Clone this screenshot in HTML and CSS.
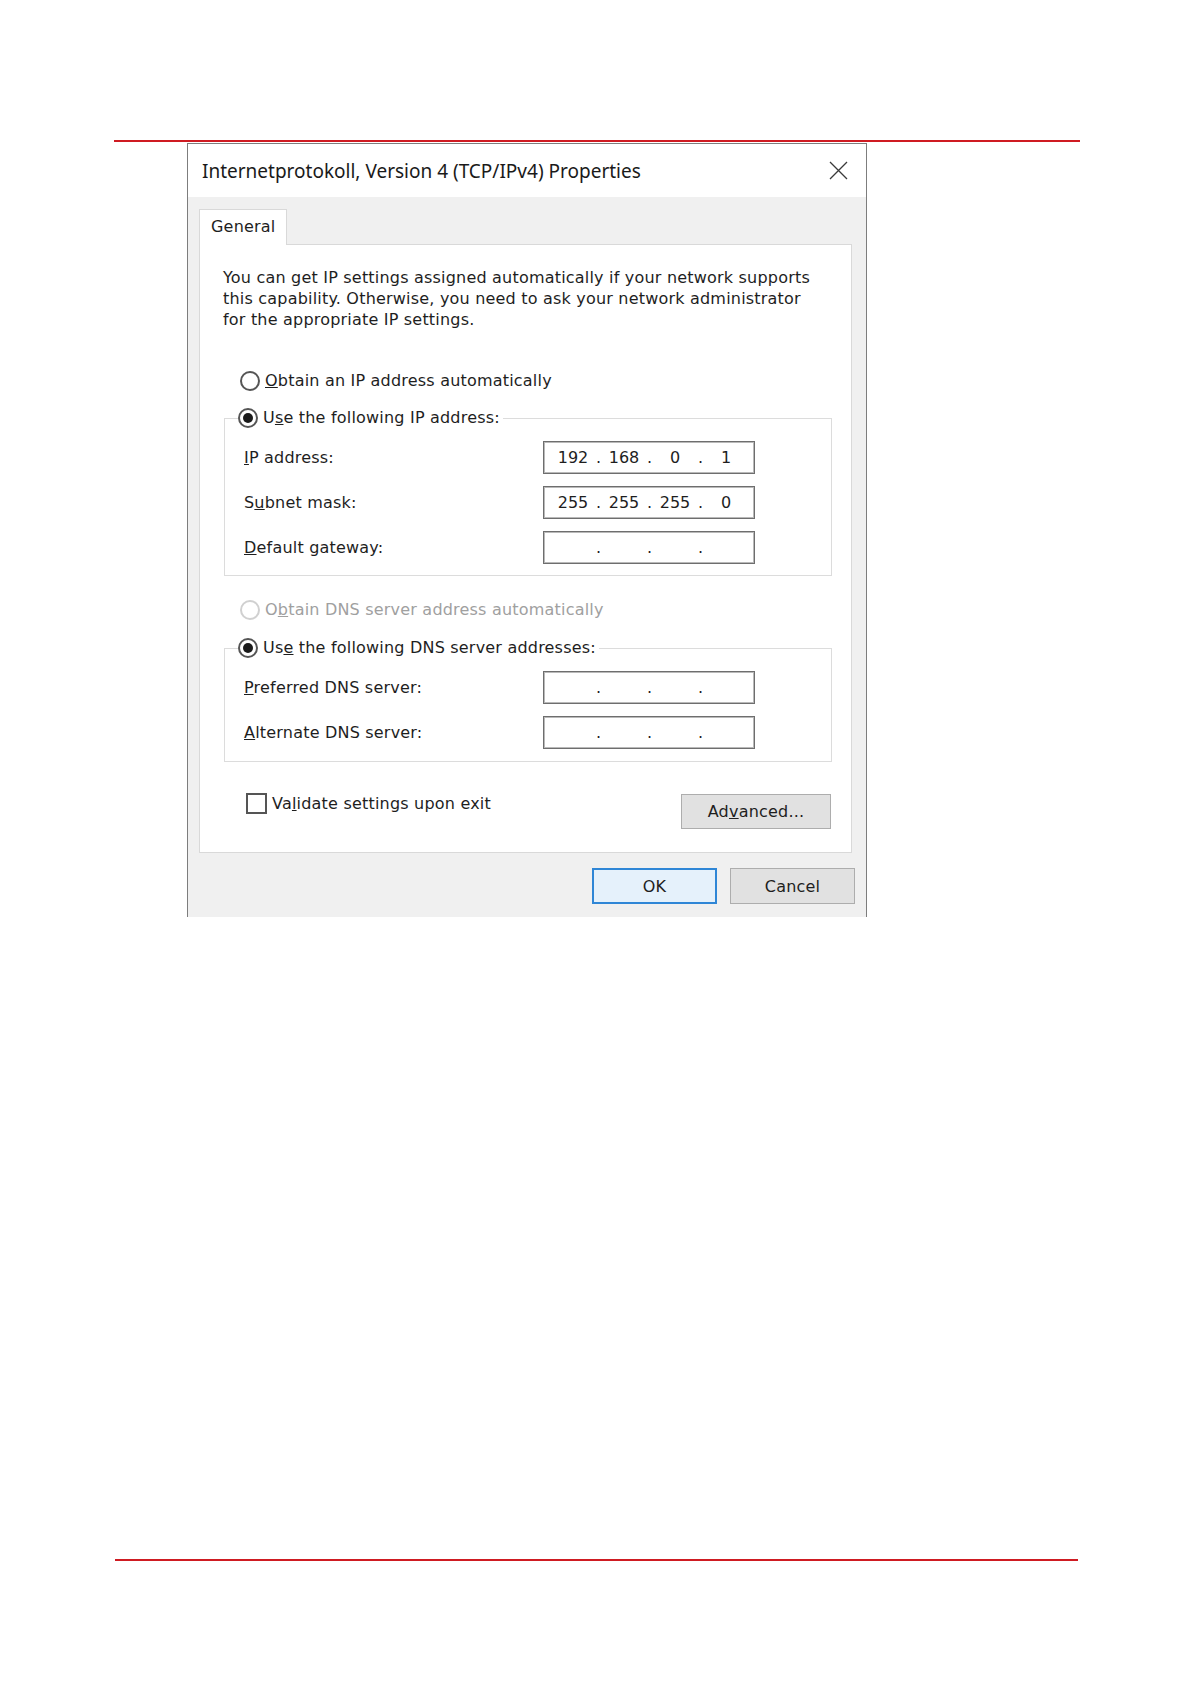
FILE: index.html
```html
<!DOCTYPE html>
<html lang="en">
<head>
  <meta charset="UTF-8">
  <title>Internetprotokoll, Version 4 (TCP/IPv4) Properties</title>
  <link rel="stylesheet" href="styles.css">
</head>
<body>
  <div class="page">
    <div class="rule"></div>

    <div class="dialog">
      <div class="titlebar">
        <span class="title">Internetprotokoll, Version 4 (TCP/IPv4) Properties</span>
        <svg class="close" width="19" height="19" viewBox="0 0 19 19">
          <path d="M1 1L18 18M18 1L1 18" stroke="#3a3a3a" stroke-width="1.3" fill="none"/>
        </svg>
      </div>

      <div class="dialog-body">
        <div class="tab">General</div>
        <div class="pane">
          <p class="intro">You can get IP settings assigned automatically if your network supports<br>this capability. Otherwise, you need to ask your network administrator<br>for the appropriate IP settings.</p>

          <div class="option first"><span class="radio"></span><span><u>O</u>btain an IP address automatically</span></div>

          <fieldset class="group">
            <legend class="option"><span class="radio checked"></span><span>U<u>s</u>e the following IP address:</span></legend>
            <div class="row">
              <label><u>I</u>P address:</label>
              <div class="ip"><span>192</span><b>.</b><span>168</span><b>.</b><span>0</span><b>.</b><span>1</span></div>
            </div>
            <div class="row">
              <label>S<u>u</u>bnet mask:</label>
              <div class="ip"><span>255</span><b>.</b><span>255</span><b>.</b><span>255</span><b>.</b><span>0</span></div>
            </div>
            <div class="row">
              <label><u>D</u>efault gateway:</label>
              <div class="ip"><span></span><b>.</b><span></span><b>.</b><span></span><b>.</b><span></span></div>
            </div>
          </fieldset>

          <div class="option disabled"><span class="radio"></span><span>O<u>b</u>tain DNS server address automatically</span></div>

          <fieldset class="group dns">
            <legend class="option"><span class="radio checked"></span><span>Us<u>e</u> the following DNS server addresses:</span></legend>
            <div class="row">
              <label><u>P</u>referred DNS server:</label>
              <div class="ip"><span></span><b>.</b><span></span><b>.</b><span></span><b>.</b><span></span></div>
            </div>
            <div class="row">
              <label><u>A</u>lternate DNS server:</label>
              <div class="ip"><span></span><b>.</b><span></span><b>.</b><span></span><b>.</b><span></span></div>
            </div>
          </fieldset>

          <div class="pane-footer">
            <div class="check-row"><span class="checkbox"></span><span>Va<u>l</u>idate settings upon exit</span></div>
            <button class="btn advanced">Ad<u>v</u>anced...</button>
          </div>
        </div>

        <div class="actions">
          <button class="btn ok">OK</button>
          <button class="btn">Cancel</button>
        </div>
      </div>
    </div>

    <div class="rule rule-bottom"></div>
  </div>
</body>
</html>
```

FILE: styles.css
```css
* {
  box-sizing: border-box;
}
body {
  margin: 0;
  background: #fff;
  color: #1e1e1e;
  font-family: "DejaVu Sans", sans-serif;
  font-size: 16px;
  letter-spacing: 0.2px;
}
.page {
  padding-top: 140px;
}
.rule {
  height: 2px;
  width: 966px;
  margin-left: 114px;
  background: #cf1b22;
}
.rule-bottom {
  width: 963px;
  margin-top: 642px;
  margin-left: 115px;
}
.dialog {
  width: 680px;
  margin: 1px 0 0 187px;
  border: 1px solid #7d7d7d;
  border-bottom: none;
  background: #f0f0f0;
}
.titlebar {
  height: 53px;
  background: #fff;
  display: flex;
  align-items: center;
  justify-content: space-between;
  padding: 0 18px 0 14px;
}
.title {
  font-family: "Noto Sans", sans-serif;
  font-size: 19px;
  letter-spacing: 0;
  color: #1a1a1a;
}
.close {
  display: block;
}
.dialog-body {
  padding: 12px 11px 13px 11px;
}
.tab {
  position: relative;
  z-index: 1;
  width: 88px;
  height: 36px;
  margin-bottom: -1px;
  padding-left: 11px;
  line-height: 34px;
  background: #fff;
  border: 1px solid #d9d9d9;
  border-bottom: none;
}
.pane {
  width: 653px;
  padding: 22px 19px 23px 23px;
  background: #fff;
  border: 1px solid #d9d9d9;
}
.intro {
  margin: 0;
  line-height: 21px;
}
.option {
  display: flex;
  align-items: center;
  gap: 5px;
  height: 22px;
  line-height: 22px;
}
.option.first {
  margin: 40px 0 0 17px;
}
.option.disabled {
  margin: 23px 0 0 17px;
  color: #a0a0a0;
}
.radio {
  flex: none;
  width: 20px;
  height: 20px;
  border: 2px solid #555;
  border-radius: 50%;
  background: #fff;
  display: flex;
  align-items: center;
  justify-content: center;
}
.radio.checked::after {
  content: "";
  width: 10px;
  height: 10px;
  border-radius: 50%;
  background: #1a1a1a;
}
.disabled .radio {
  border-color: #d0d0d0;
}
.group {
  margin: 15px 0 0 1px;
  padding: 12px 0 11px 0;
  border: 1px solid #dcdcdc;
}
.group.dns {
  margin-top: 16px;
  padding-bottom: 12px;
}
.group legend {
  margin-left: 13px;
  padding: 0 3px 0 0;
}
.row {
  display: flex;
  align-items: center;
  height: 33px;
  padding-left: 19px;
}
.row + .row {
  margin-top: 12px;
}
.row label {
  width: 299px;
}
.ip {
  width: 212px;
  height: 33px;
  display: flex;
  align-items: center;
  padding-left: 10px;
  border: 1px solid #6e6e6e;
  box-shadow: inset 0 0 0 1px #b9b9b9;
  letter-spacing: 0;
}
.ip span {
  width: 38px;
  text-align: center;
}
.ip b {
  width: 13px;
  font-weight: normal;
  text-align: center;
}
.pane-footer {
  display: flex;
  justify-content: space-between;
  align-items: flex-start;
  margin-top: 30px;
  padding-left: 23px;
}
.check-row {
  display: flex;
  align-items: center;
  gap: 5px;
  height: 22px;
}
.checkbox {
  width: 21px;
  height: 21px;
  border: 2px solid #555;
  background: #fff;
}
.btn {
  height: 36px;
  width: 125px;
  padding: 0;
  font-family: inherit;
  font-size: 16px;
  letter-spacing: inherit;
  color: #1e1e1e;
  background: #e1e1e1;
  border: 1px solid #adadad;
}
.btn.advanced {
  width: 150px;
  height: 35px;
  margin: 2px 1px 0 0;
}
.btn.ok {
  background: #e5f1fb;
  border: 2px solid #2f86d6;
}
.actions {
  display: flex;
  justify-content: flex-end;
  gap: 13px;
  margin-top: 15px;
}
```
